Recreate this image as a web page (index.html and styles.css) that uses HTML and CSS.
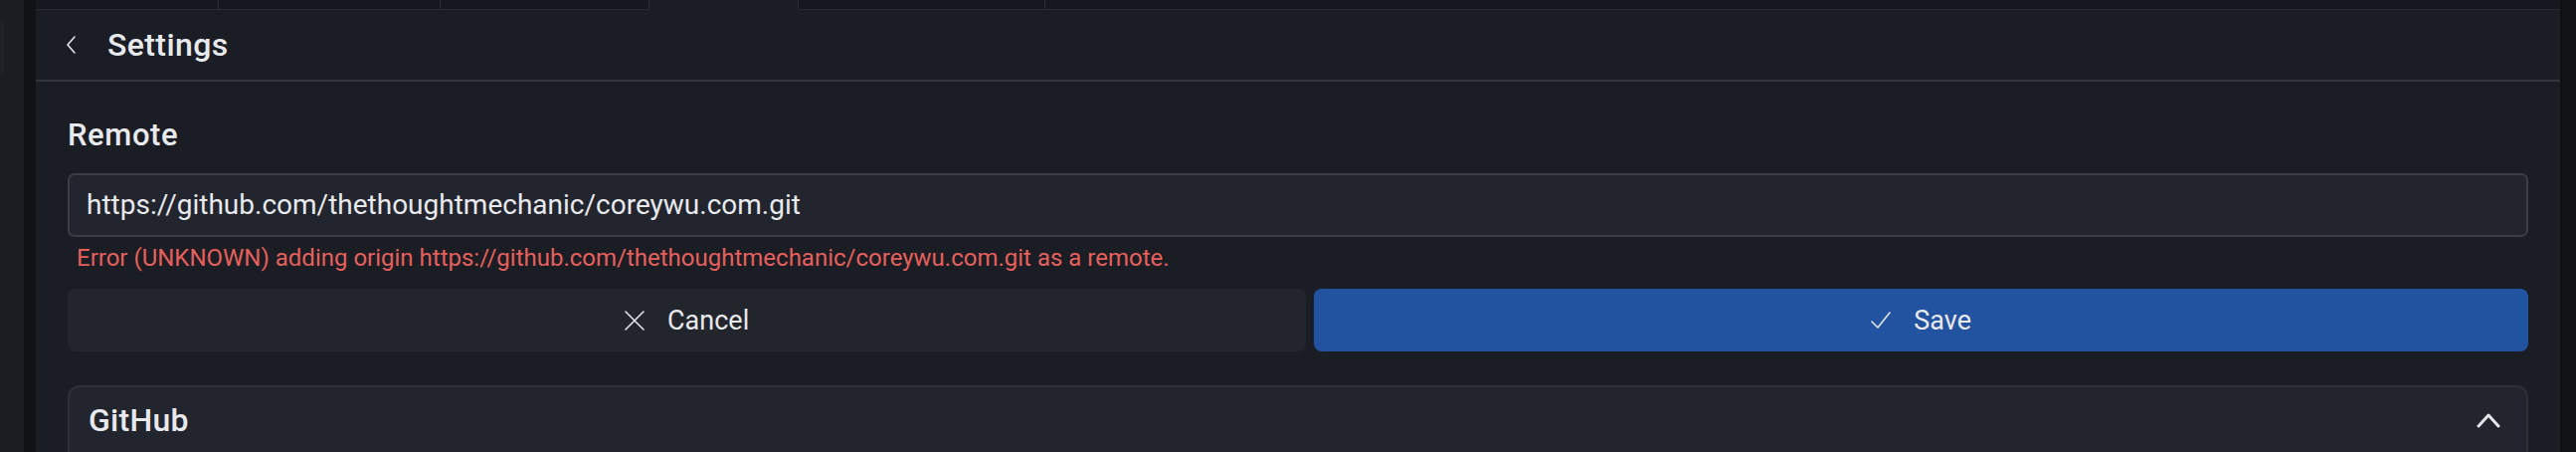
FILE: index.html
```html
<!DOCTYPE html>
<html lang="en">
<head>
<meta charset="utf-8">
<title>Settings</title>
<link rel="stylesheet" href="styles.css">
</head>
<body>
<div class="app">
  <aside class="side-edge"><div class="side-nub"></div></aside>
  <div class="divider"></div>
  <main class="main">
    <nav class="tabs">
      <div class="tab t1"></div>
      <div class="tab t2"></div>
      <div class="tab t3"></div>
      <div class="tab active"></div>
      <div class="tab t5"></div>
      <div class="tab rest"></div>
    </nav>
    <header class="header">
      <svg class="back" width="12" height="20" viewBox="0 0 12 20" aria-hidden="true"><path d="M9 2 L2 10 L9 18" fill="none" stroke="#e4e5ea" stroke-width="1.6" stroke-linecap="round" stroke-linejoin="round"/></svg>
      <h1 class="title">Settings</h1>
    </header>
    <section class="content">
      <div class="label">Remote</div>
      <div class="input">https://github.com/thethoughtmechanic/coreywu.com.git</div>
      <div class="error">Error (UNKNOWN) adding origin https://github.com/thethoughtmechanic/coreywu.com.git as a remote.</div>
      <div class="actions">
        <button class="btn cancel">
          <svg width="20" height="20" viewBox="0 0 20 20" aria-hidden="true"><path d="M1 1 L19 19 M19 1 L1 19" fill="none" stroke="#e4e5ea" stroke-width="1.6" stroke-linecap="round"/></svg>
          <span>Cancel</span>
        </button>
        <button class="btn save">
          <svg width="20" height="18" viewBox="0 0 20 18" aria-hidden="true"><path d="M1 10 L7 16 L19 1" fill="none" stroke="#e4e5ea" stroke-width="1.6" stroke-linecap="round" stroke-linejoin="round"/></svg>
          <span>Save</span>
        </button>
      </div>
      <div class="card">
        <div class="card-head">
          <span class="card-title">GitHub</span>
          <svg width="24" height="16" viewBox="0 0 24 16" aria-hidden="true"><path d="M2 14 L12 3 L22 14" fill="none" stroke="#e4e5ea" stroke-width="3" stroke-linecap="round" stroke-linejoin="round"/></svg>
        </div>
      </div>
    </section>
  </main>
  <div class="scroll-edge"></div>
</div>
</body>
</html>
```

FILE: styles.css
```css
* { box-sizing: border-box; }
html, body { margin: 0; padding: 0; }
body {
  background: #1b1d24;
  font-family: Roboto, "Liberation Sans", sans-serif;
  color: #e6e7eb;
  overflow: hidden;
}
.app {
  display: flex;
  height: 454px;
  width: 2590px;
  overflow: hidden;
}
.side-edge {
  width: 24px;
  flex: none;
  background: #1c1d22;
  padding-top: 20px;
}
.side-nub {
  width: 4px;
  height: 55px;
  background: #212227;
  border-radius: 0 6px 6px 0;
}
.divider {
  width: 12px;
  flex: none;
  background: #111215;
}
.main {
  flex: 1;
  min-width: 0;
  display: flex;
  flex-direction: column;
  background: #1b1d24;
}
.tabs {
  display: flex;
  height: 10px;
  flex: none;
}
.tab {
  background: #17171f;
  border-bottom: 1px solid #2a2b33;
  border-right: 1px solid #2a2b33;
}
.t1 { width: 184px; }
.t2 { width: 223px; }
.t3 { width: 210px; }
.tab.active { width: 150px; background: #1b1d24; border-bottom-color: transparent; border-right: 1px solid #2a2b33; }
.t5 { width: 248px; }
.tab.rest { flex: 1; border-right: none; }
.header {
  height: 72px;
  flex: none;
  display: flex;
  align-items: center;
  padding-left: 30px;
  border-bottom: 2px solid #33353d;
}
.back { margin-right: 30px; }
.title {
  margin: 0;
  font-size: 32px;
  font-weight: 500;
  color: #e8e9ed;
  letter-spacing: 0.4px;
}
.content {
  padding: 34px 32px 0 32px;
}
.label {
  font-size: 31px;
  font-weight: 500;
  line-height: 40px;
  letter-spacing: 0.6px;
  color: #e8e9ed;
}
.input {
  margin-top: 18px;
  height: 64px;
  border: 2px solid #3b3e46;
  border-radius: 7px;
  background: #22252d;
  font-size: 28px;
  line-height: 60px;
  padding-left: 17px;
  color: #e8e9ed;
}
.error {
  margin-top: 6px;
  padding-left: 9px;
  font-size: 24px;
  line-height: 30px;
  color: #e5605c;
}
.actions {
  display: flex;
  gap: 8px;
  margin-top: 16px;
}
.btn {
  flex: 1 1 auto;
  height: 63px;
  border: none;
  border-radius: 8px;
  display: flex;
  align-items: center;
  justify-content: center;
  gap: 23px;
  font-family: inherit;
  font-size: 27px;
  color: #e8e9ed;
}
.btn.cancel { background: #23252d; }
.btn.save { background: #2253a0; }
.card {
  margin-top: 34px;
  background: #22252d;
  border: 2px solid #2e3038;
  border-radius: 12px;
  height: 120px;
}
.card-head {
  display: flex;
  align-items: center;
  justify-content: space-between;
  height: 66px;
  padding: 0 26px 0 19px;
}
.card-title {
  font-size: 32px;
  font-weight: 500;
  color: #e8e9ed;
  letter-spacing: 0.3px;
}
.scroll-edge {
  width: 16px;
  flex: none;
  background: #121317;
  border-left: 2px solid #0e0f12;
}
```
